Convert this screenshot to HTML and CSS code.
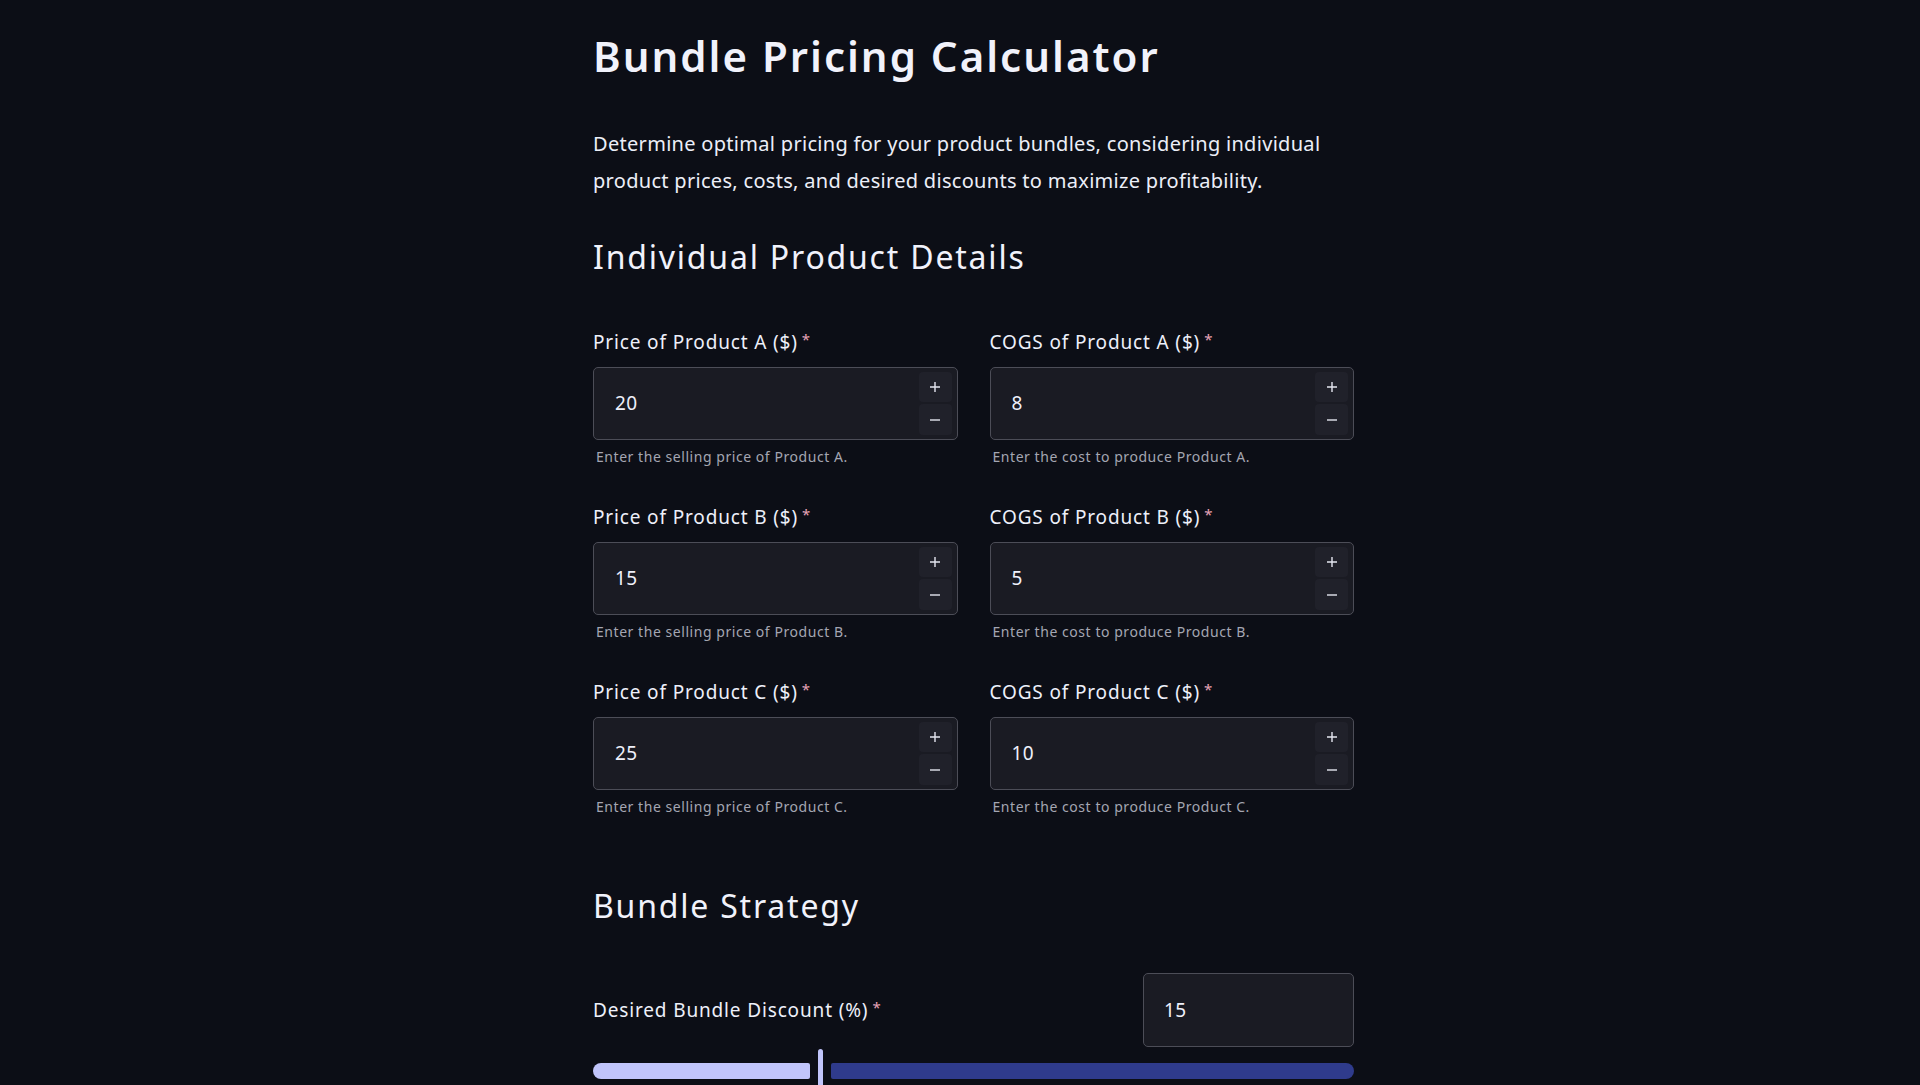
FILE: index.html
```html
<!DOCTYPE html>
<html lang="en">
<head>
<meta charset="utf-8">
<title>Bundle Pricing Calculator</title>
<link rel="stylesheet" href="styles.css">
</head>
<body>
<div class="main">
  <div class="page">
    <h1 class="title">Bundle Pricing Calculator</h1>
    <p class="intro">Determine optimal pricing for your product bundles, considering individual product prices, costs, and desired discounts to maximize profitability.</p>

    <h2 class="section first">Individual Product Details</h2>

    <div class="grid">
      <div class="field">
        <label class="label">Price of Product A ($)<span class="req">*</span></label>
        <div class="numbox">
          <input class="num" type="text" value="20">
          <div class="steps">
            <button class="step"><svg viewBox="0 0 12 12"><path d="M6 1v10M1 6h10"/></svg></button>
            <button class="step"><svg viewBox="0 0 12 12"><path d="M1 6h10"/></svg></button>
          </div>
        </div>
        <div class="help">Enter the selling price of Product A.</div>
      </div>
      <div class="field">
        <label class="label">COGS of Product A ($)<span class="req">*</span></label>
        <div class="numbox">
          <input class="num" type="text" value="8">
          <div class="steps">
            <button class="step"><svg viewBox="0 0 12 12"><path d="M6 1v10M1 6h10"/></svg></button>
            <button class="step"><svg viewBox="0 0 12 12"><path d="M1 6h10"/></svg></button>
          </div>
        </div>
        <div class="help">Enter the cost to produce Product A.</div>
      </div>

      <div class="field">
        <label class="label">Price of Product B ($)<span class="req">*</span></label>
        <div class="numbox">
          <input class="num" type="text" value="15">
          <div class="steps">
            <button class="step"><svg viewBox="0 0 12 12"><path d="M6 1v10M1 6h10"/></svg></button>
            <button class="step"><svg viewBox="0 0 12 12"><path d="M1 6h10"/></svg></button>
          </div>
        </div>
        <div class="help">Enter the selling price of Product B.</div>
      </div>
      <div class="field">
        <label class="label">COGS of Product B ($)<span class="req">*</span></label>
        <div class="numbox">
          <input class="num" type="text" value="5">
          <div class="steps">
            <button class="step"><svg viewBox="0 0 12 12"><path d="M6 1v10M1 6h10"/></svg></button>
            <button class="step"><svg viewBox="0 0 12 12"><path d="M1 6h10"/></svg></button>
          </div>
        </div>
        <div class="help">Enter the cost to produce Product B.</div>
      </div>

      <div class="field">
        <label class="label">Price of Product C ($)<span class="req">*</span></label>
        <div class="numbox">
          <input class="num" type="text" value="25">
          <div class="steps">
            <button class="step"><svg viewBox="0 0 12 12"><path d="M6 1v10M1 6h10"/></svg></button>
            <button class="step"><svg viewBox="0 0 12 12"><path d="M1 6h10"/></svg></button>
          </div>
        </div>
        <div class="help">Enter the selling price of Product C.</div>
      </div>
      <div class="field">
        <label class="label">COGS of Product C ($)<span class="req">*</span></label>
        <div class="numbox">
          <input class="num" type="text" value="10">
          <div class="steps">
            <button class="step"><svg viewBox="0 0 12 12"><path d="M6 1v10M1 6h10"/></svg></button>
            <button class="step"><svg viewBox="0 0 12 12"><path d="M1 6h10"/></svg></button>
          </div>
        </div>
        <div class="help">Enter the cost to produce Product C.</div>
      </div>
    </div>

    <h2 class="section second">Bundle Strategy</h2>

    <div class="discount">
      <label class="label">Desired Bundle Discount (%)<span class="req">*</span></label>
      <input class="num small" type="text" value="15">
    </div>
    <div class="slider">
      <div class="track-active" style="width: calc(30% - 11px)"></div>
      <div class="thumb"></div>
      <div class="track-rest"></div>
    </div>
  </div>
</div>
</body>
</html>
```
FILE: styles.css
```css
* { box-sizing: border-box; }

html, body {
  margin: 0;
  padding: 0;
  background: #0c0e16;
  height: 1085px;
  overflow: hidden;
}

body {
  font-family: "Noto Sans", "DejaVu Sans", sans-serif;
  color: #eef0fa;
}

.main {
  display: flex;
  justify-content: center;
  padding-left: 27px;
}

.page {
  width: 761px;
  padding-top: 31px;
}

.title {
  margin: 0;
  font-size: 42px;
  line-height: 50px;
  font-weight: 600;
  letter-spacing: 2px;
  color: #f1f2fb;
}

.intro {
  margin: 45px 0 0;
  font-size: 20px;
  line-height: 36.7px;
  letter-spacing: 0.3px;
  color: #eceef8;
}

.section {
  margin: 0;
  font-size: 32px;
  line-height: 38px;
  font-weight: 400;
  letter-spacing: 1.8px;
  color: #f1f2fb;
}

.section.first { margin-top: 39px; }
.section.second { margin-top: 70px; }

.grid {
  margin-top: 52.5px;
  display: grid;
  grid-template-columns: 1fr 1fr;
  column-gap: 32px;
  row-gap: 37px;
}

.field {
  display: flex;
  flex-direction: column;
}

.label {
  font-size: 19px;
  line-height: 26px;
  font-weight: 400;
  letter-spacing: 0.85px;
  color: #eef0fa;
}

.req {
  color: #e6a3b6;
  font-size: 15px;
  margin-left: 4px;
  vertical-align: top;
  line-height: 20px;
}

.numbox {
  margin-top: 12px;
  height: 73px;
  display: flex;
  align-items: stretch;
  background: #1a1b23;
  border: 1px solid #4c4d57;
  border-radius: 5px;
}

.num {
  flex: 1;
  min-width: 0;
  border: 0;
  background: transparent;
  color: #eef0fa;
  font-family: inherit;
  font-size: 19px;
  letter-spacing: 0.5px;
  padding: 0 0 0 21px;
  outline: none;
}

.steps {
  display: flex;
  flex-direction: column;
  gap: 2px;
  padding: 4px 5px 4px 0;
}

.step {
  width: 33px;
  flex: 1;
  border: 0;
  padding: 0;
  border-radius: 4px;
  background: #20212a;
  display: flex;
  align-items: center;
  justify-content: center;
}

.step svg {
  width: 12px;
  height: 12px;
  stroke: #e4e6f0;
  stroke-width: 1.4;
  fill: none;
}

.help {
  margin-top: 7px;
  padding-left: 3px;
  font-size: 14px;
  line-height: 20px;
  letter-spacing: 0.55px;
  color: #a4a6b2;
}

.discount {
  margin-top: 48px;
  display: flex;
  align-items: center;
  justify-content: space-between;
}

.num.small {
  flex: 0 0 211px;
  height: 74px;
  background: #1a1b23;
  border: 1px solid #4c4d57;
  border-radius: 5px;
  padding-left: 20px;
}

.slider {
  margin-top: 2px;
  height: 44px;
  display: flex;
  align-items: center;
}

.track-active {
  height: 16px;
  background: #c1c5fb;
  border-radius: 8px 2px 2px 8px;
}

.thumb {
  width: 5px;
  height: 44px;
  margin: 0 8px;
  background: #c1c5fb;
  border-radius: 3px;
}

.track-rest {
  flex: 1;
  height: 16px;
  background: #2f3b8c;
  border-radius: 2px 8px 8px 2px;
}
```
